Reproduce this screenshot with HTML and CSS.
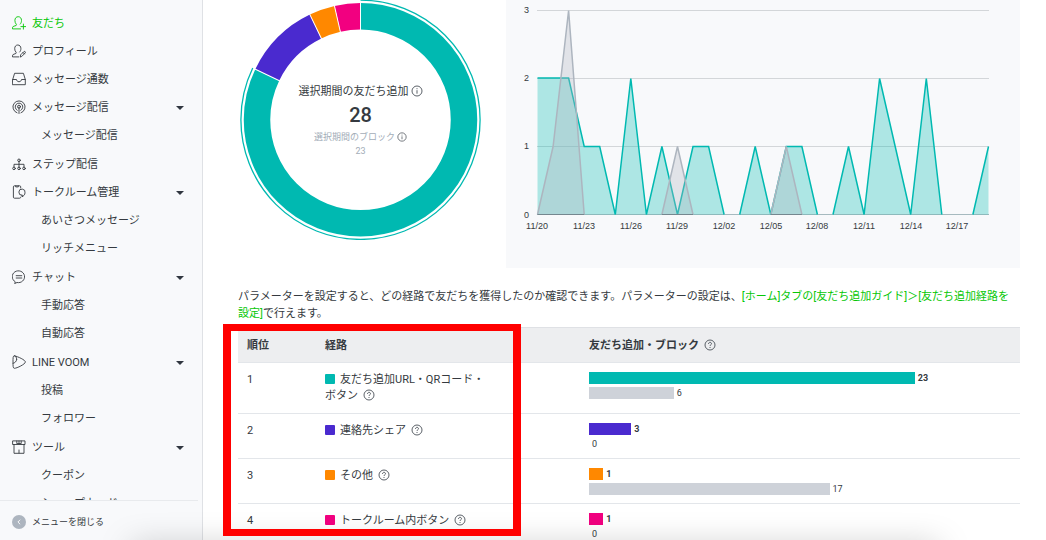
FILE: index.html
```html
<!DOCTYPE html>
<html lang="ja">
<head>
<meta charset="utf-8">
<title>友だち</title>
<link rel="stylesheet" href="styles.css">
</head>
<body>
<div class="app">
  <aside class="sidebar">
    <nav class="nav">
      <div class="nav-group">
        <a class="nav-item active" href="#"><svg class="nav-icon" viewBox="0 0 14 14"><path d="M8.600 12.900H.5v-1.100c0-.9.5-1.300 1.400-1.600l2.200-.7c.5-.2.5-.9.2-1.200C3.500 7.400 2.900 6.200 2.900 4.500 2.900 2.200 4.200.7 6.200.7s3.300 1.500 3.300 3.800c0 1.600-.5 2.700-1.300 3.600M11.400 8.100v5M8.900 10.600h5"/></svg>友だち</a>
        <a class="nav-item" href="#"><svg class="nav-icon" viewBox="0 0 14 14"><path d="M6.800 12.900H.5v-1.100c0-.9.5-1.300 1.400-1.600l2-.7c.5-.2.5-.9.2-1.200-.8-.9-1.400-2-1.400-3.600C2.700 2.300 4 1 5.800 1s3.100 1.300 3.100 3.600c0 1.500-.4 2.500-1.200 3.400M8.400 12.700l.3-1.900 3.200-3.200c.9-.6 2 .4 1.300 1.400L10 12.200zM11 8.500l1.400 1.400"/></svg>プロフィール</a>
        <a class="nav-item" href="#"><svg class="nav-icon" viewBox="0 0 14 14"><path d="M.7 7.500 2.600 1.300h8.800l1.900 6.200v5.200H.7zM.7 7.500h3.800c.2 1.400 1.100 2.200 2.500 2.200s2.300-.8 2.500-2.200h3.800"/></svg>メッセージ通数</a>
        <button class="nav-item" type="button"><svg class="nav-icon" viewBox="0 0 14 14"><path d="M5 12.800a6.100 6.100 0 1 1 4 0M5.200 10.300a3.800 3.800 0 1 1 3.600 0M7 7v6.500"/><circle cx="7" cy="6.700" r="1.500"/></svg>メッセージ配信<span class="caret"></span></button>
        <a class="nav-item sub" href="#">メッセージ配信</a>
      </div>
      <div class="nav-group">
        <a class="nav-item" href="#"><svg class="nav-icon" viewBox="0 0 14 14"><path d="M7 4.500v6M2 10V7.300h10V10"/><circle cx="7" cy="3.300" r="1.300"/><circle cx="2" cy="11.400" r="1.300"/><circle cx="7" cy="11.400" r="1.300"/><circle cx="12" cy="11.400" r="1.300"/></svg>ステップ配信</a>
        <button class="nav-item" type="button"><svg class="nav-icon" viewBox="0 0 14 14"><path d="M8.700 12.200c0 .6-.4 1-1 1H2.400c-.6 0-1-.4-1-1V1.800c0-.6.4-1 1-1h5.300c.6 0 1 .4 1 1V3M3.700.9v1h2.600v-1M10 10.300v1.500c1.500-.7 3-2 3-4a3.100 3.100 0 1 0-3 2.500z"/></svg>トークルーム管理<span class="caret"></span></button>
        <a class="nav-item sub" href="#">あいさつメッセージ</a>
        <a class="nav-item sub" href="#">リッチメニュー</a>
      </div>
      <div class="nav-group">
        <button class="nav-item" type="button"><svg class="nav-icon" viewBox="0 0 14 14"><path d="M3 11.700A6.200 5.900 0 1 1 5 12.500L3 13.400zM4.200 5.700h5.600M4.200 8h5.600"/></svg>チャット<span class="caret"></span></button>
        <a class="nav-item sub" href="#">手動応答</a>
        <a class="nav-item sub" href="#">自動応答</a>
      </div>
      <div class="nav-group">
        <button class="nav-item" type="button"><svg class="nav-icon" viewBox="0 0 14 14"><path d="M4.700 4.500C4.700 2.200 3.500.7 2.200.8 1 .9 1 3 1 7s0 6.200 1.300 6.300C4.800 13.400 13.400 9 13.400 7S6 1.600 2.500.8M1.100 8.300c1.700-.3 3.300-1.600 3.600-3.800"/></svg>LINE VOOM<span class="caret"></span></button>
        <a class="nav-item sub" href="#">投稿</a>
        <a class="nav-item sub" href="#">フォロワー</a>
      </div>
      <div class="nav-group">
        <button class="nav-item" type="button"><svg class="nav-icon" viewBox="0 0 14 14"><path d="M1 .9h12v3.600H1zM2 4.500v8.800h10V4.500M4.800 1v2.600h4.400V1M7 1v2.600M7 13V10"/></svg>ツール<span class="caret"></span></button>
        <a class="nav-item sub" href="#">クーポン</a>
        <a class="nav-item sub" href="#">ショップカード</a>
      </div>
    </nav>
    <button class="collapse" type="button"><svg class="nav-icon" viewBox="0 0 14 14"><circle class="collapse-dot" cx="7" cy="7" r="7"/><path class="collapse-arrow" d="M7.900 5 5.900 7l2 2"/></svg>メニューを閉じる</button>
  </aside>

  <main class="main">
    <section class="summary">
      <div class="donut">
        <svg class="donut-ring" viewBox="0 0 241 240">
          <g fill="none" transform="rotate(-90 120.500 119.800)">
            <g stroke-width="26.500">
              <circle cx="120.500" cy="119.800" r="103.500" pathLength="28" stroke="#00b9b1" stroke-dasharray="23 28"/>
              <circle cx="120.500" cy="119.800" r="103.500" pathLength="28" stroke="#4a2acf" stroke-dasharray="3 28" stroke-dashoffset="-23"/>
              <circle cx="120.500" cy="119.800" r="103.500" pathLength="28" stroke="#ff8800" stroke-dasharray="1 28" stroke-dashoffset="-26"/>
              <circle cx="120.500" cy="119.800" r="103.500" pathLength="28" stroke="#f20080" stroke-dasharray="1 28" stroke-dashoffset="-27"/>
            </g>
            <circle cx="120.500" cy="119.800" r="119.600" pathLength="28" stroke="#00b9b1" stroke-width="1.300" stroke-dasharray="23 28"/>
          </g>
          <g stroke="#fff" stroke-width="1">
            <path d="M120.500 2v29"/>
            <path d="M120.500 2v29" transform="rotate(295.700 120.500 119.800)"/>
            <path d="M120.500 2v29" transform="rotate(334.300 120.500 119.800)"/>
            <path d="M120.500 2v29" transform="rotate(347.100 120.500 119.800)"/>
          </g>
        </svg>
        <div class="donut-text">
          <div class="donut-label">選択期間の友だち追加<svg class="mark mark-info" viewBox="0 0 12 12"><circle cx="6" cy="6" r="5"/><path d="M6 5.200v3.500M6 3.200v1"/></svg></div>
          <div class="donut-value">28</div>
          <div class="donut-minor">選択期間のブロック<svg class="mark mark-small" viewBox="0 0 12 12"><circle cx="6" cy="6" r="5"/><path d="M6 5.200v3.500M6 3.200v1"/></svg></div>
          <div class="donut-minor">23</div>
        </div>
      </div>
      <div class="chart">
        <svg class="chart-plot" viewBox="0 0 514 268">
          <path class="grid" d="M31 10.500h452M31 78.500h452M31 146.500h452"/>
          <path class="grid-base" d="M31 214.500h452"/>
          <g transform="translate(31.500 214.500)">
            <path class="area-add" d="M0 0V-136H31.100L46.700-68H62.200L77.800 0 93.300-136 108.900 0 124.400-68 140 0 155.500-68H171.100L186.600 0H202.200L217.700-68 233.300 0 248.800-68H264.400L279.900 0H295.500L311-68 326.600 0 342.100-136 357.700-68 373.200 0 388.800-136 404.300 0H435.400L451-68V0z"/>
            <path class="line-add" d="M0-136.500H31.100L46.700-68H62.200L77.800 0 93.300-136 108.900 0 124.400-68 140 0 155.500-68H171.100L186.600 0M202.200 0 217.700-68 233.300 0 248.800-68H264.400L279.900 0M295.500 0 311-68 326.600 0 342.100-136 357.700-68 373.200 0 388.800-136 404.300 0M435.400 0 451-68"/>
            <path class="area-block" d="M0 0 15.600-68 31.100-204 46.700 0zM124.400 0 140-68 155.500 0zM233.300 0 248.800-68 264.400 0z"/>
            <path class="line-block" d="M0 0 15.600-68 31.100-204 46.700 0M124.400 0 140-68 155.500 0M233.300 0 248.800-68 264.400 0"/>
            <path class="base-line" d="M0 0H46.700M124.400 0H155.500M233.300 0H264.400"/>
          </g>
          <g class="axis" text-anchor="end"><text x="23" y="13">3</text><text x="23" y="81">2</text><text x="23" y="149">1</text><text x="23" y="218">0</text></g>
          <g class="axis" text-anchor="middle"><text x="31" y="229">11/20</text><text x="78" y="229">11/23</text><text x="125" y="229">11/26</text><text x="171" y="229">11/29</text><text x="218" y="229">12/02</text><text x="265" y="229">12/05</text><text x="311" y="229">12/08</text><text x="358" y="229">12/11</text><text x="405" y="229">12/14</text><text x="451" y="229">12/17</text></g>
        </svg>
      </div>
    </section>

    <p class="note">パラメーターを設定すると、どの経路で友だちを獲得したのか確認できます。パラメーターの設定は、<a href="#">[ホーム]タブの[友だち追加ガイド]＞[友だち追加経路を設定]</a>で行えます。</p>

    <div class="routes">
      <table class="route-table">
        <thead>
          <tr><th class="col-rank" scope="col">順位</th><th class="col-route" scope="col">経路</th><th scope="col">友だち追加・ブロック<svg class="mark mark-help" viewBox="0 0 12 12"><circle cx="6" cy="6" r="5"/><path d="M4.500 4.900c0-2.100 3-2.100 3-.2C7.500 5.800 6 5.800 6 7M6 8v1"/></svg></th></tr>
        </thead>
        <tbody>
          <tr>
            <td>1</td>
            <td><div class="route"><span class="swatch teal"></span>友だち追加URL・QRコード・ボタン<svg class="mark mark-help" viewBox="0 0 12 12"><circle cx="6" cy="6" r="5"/><path d="M4.500 4.900c0-2.100 3-2.100 3-.2C7.500 5.800 6 5.800 6 7M6 8v1"/></svg></div></td>
            <td><div class="bars"><div class="bar-row"><span class="bar teal" style="width:77.200%"></span><b>23</b></div><div class="bar-row"><span class="bar gray" style="width:20.100%"></span>6</div></div></td>
          </tr>
          <tr>
            <td>2</td>
            <td><div class="route"><span class="swatch violet"></span>連絡先シェア<svg class="mark mark-help" viewBox="0 0 12 12"><circle cx="6" cy="6" r="5"/><path d="M4.500 4.900c0-2.100 3-2.100 3-.2C7.500 5.800 6 5.800 6 7M6 8v1"/></svg></div></td>
            <td><div class="bars"><div class="bar-row"><span class="bar violet" style="width:10%"></span><b>3</b></div><div class="bar-row"><span class="bar gray" style="width:0%"></span>0</div></div></td>
          </tr>
          <tr>
            <td>3</td>
            <td><div class="route"><span class="swatch orange"></span>その他<svg class="mark mark-help" viewBox="0 0 12 12"><circle cx="6" cy="6" r="5"/><path d="M4.500 4.900c0-2.100 3-2.100 3-.2C7.500 5.800 6 5.800 6 7M6 8v1"/></svg></div></td>
            <td><div class="bars"><div class="bar-row"><span class="bar orange" style="width:3.400%"></span><b>1</b></div><div class="bar-row"><span class="bar gray" style="width:57%"></span>17</div></div></td>
          </tr>
          <tr>
            <td>4</td>
            <td><div class="route"><span class="swatch pink"></span>トークルーム内ボタン<svg class="mark mark-help" viewBox="0 0 12 12"><circle cx="6" cy="6" r="5"/><path d="M4.500 4.900c0-2.100 3-2.100 3-.2C7.500 5.800 6 5.800 6 7M6 8v1"/></svg></div></td>
            <td><div class="bars"><div class="bar-row"><span class="bar pink" style="width:3.400%"></span><b>1</b></div><div class="bar-row"><span class="bar gray" style="width:0%"></span>0</div></div></td>
          </tr>
        </tbody>
      </table>
      <div class="highlight"></div>
    </div>
  </main>
  <div class="bottom-shade"></div>
</div>
</body>
</html>
```
FILE: styles.css
```css
* { box-sizing: border-box; }

body {
  margin: 0;
  background: #fff;
  color: #353a40;
  font: 11px/16px Roboto, "Noto Sans CJK JP", sans-serif;
}

button {
  border: 0;
  background: none;
  color: inherit;
  font: inherit;
  text-align: left;
}

a { color: inherit; text-decoration: none; }

.app {
  position: relative;
  display: flex;
  height: 100vh;
  overflow: hidden;
}

/* Sidebar */
.sidebar {
  display: flex;
  flex: none;
  flex-direction: column;
  width: 203px;
  border-right: 1px solid #dfe1e5;
  background: #f8f9fb;
}

.nav {
  flex: 1;
  min-height: 0;
  padding-top: 10px;
  overflow: hidden;
}

.nav-group { margin-bottom: 1px; }

.nav-item {
  display: flex;
  align-items: center;
  width: 100%;
  height: 28px;
  padding: 0 18px 0 12px;
  white-space: nowrap;
}

.nav-item.sub { padding-left: 41px; }
.nav-item.active { color: #06c706; }

.nav-icon {
  flex: none;
  width: 14px;
  height: 14px;
  margin-right: 6px;
  fill: none;
  stroke: currentColor;
  stroke-width: 0.9;
  stroke-linecap: round;
  stroke-linejoin: round;
}

.nav .nav-icon { margin-bottom: 2px; }

.caret {
  margin-left: auto;
  border: 4px solid transparent;
  border-top-color: #303740;
  border-bottom: 0;
}

.collapse {
  display: flex;
  flex: none;
  align-items: center;
  height: 40px;
  margin-right: 4px;
  padding: 3px 12px 0;
  border-top: 1px solid #e8eaed;
  font-size: 9px;
}

.collapse-dot { fill: #adb5bf; stroke: none; }
.collapse-arrow { stroke: #fff; }

/* Summary */
.main {
  flex: 1;
  min-width: 0;
  padding: 0 26px 0 35px;
  overflow: hidden;
}

.summary {
  display: grid;
  grid-template-columns: 268px 1fr;
}

.donut {
  display: grid;
  justify-items: center;
  align-items: start;
  width: 245px;
}

.donut-ring,
.donut-text { grid-area: 1 / 1; }

.donut-ring {
  width: 241px;
  height: 240px;
}

.donut-text {
  padding-top: 84px;
  text-align: center;
}

.donut-value {
  font-size: 20px;
  font-weight: 500;
  line-height: 30px;
}

.donut-minor {
  color: #a3adb8;
  font-size: 9px;
  line-height: 14px;
}

.mark {
  width: 12px;
  height: 12px;
  vertical-align: -2px;
  fill: none;
  stroke: #4a5058;
  stroke-width: 0.9;
}

.mark-info { margin-left: 2px; }
.mark-small { width: 10px; height: 10px; margin-left: 2px; }
.mark-help { margin-left: 5px; }

.chart { background: #f8f9fb; }
.chart-plot { display: block; width: 100%; }
.grid { stroke: #d3d6d9; }
.grid-base { stroke: #a6babf; }
.area-add { fill: #00b9b1; fill-opacity: 0.3; }
.line-add { fill: none; stroke: #00b9b1; stroke-width: 1.5; }
.area-block { fill: #b0b5c0; fill-opacity: 0.32; }
.line-block { fill: none; stroke: #adb5bf; stroke-width: 1.5; }
.base-line { stroke: #75878f; }
.axis { fill: #353a40; font: 9px "Liberation Sans", Arial, sans-serif; }

.note {
  margin: 20px 0 5px;
  padding-right: 8px;
  line-height: 17px;
}

.note a { color: #06c706; }

/* Routes */
.routes { position: relative; }

.route-table {
  width: 100%;
  border-spacing: 0;
  table-layout: fixed;
}

.col-rank { width: 78px; }
.col-route { width: 264px; }

th {
  height: 35px;
  padding: 1px 9px 0;
  border-top: 1px solid #dfe1e5;
  background: #edeef0;
  font-weight: 700;
  text-align: left;
}

td {
  padding: 9px 9px 8px;
  border-top: 1px solid #e3e6ea;
  vertical-align: top;
}

.route {
  max-width: 168px;
  padding-bottom: 1px;
}

.swatch {
  display: inline-block;
  width: 10px;
  height: 10px;
  margin-right: 5px;
  border-radius: 1px;
  vertical-align: -1px;
}

.bars {
  display: flex;
  flex-direction: column;
  gap: 3px;
}

.bar-row {
  display: flex;
  align-items: center;
  gap: 3px;
  height: 12px;
  font-size: 9px;
  line-height: 12px;
}

.bar { height: 12px; }

.teal { background: #00b9b1; }
.violet { background: #4a2acf; }
.orange { background: #ff8800; }
.pink { background: #f20080; }
.gray { background: #ced2d9; }

.highlight {
  position: absolute;
  top: -3px;
  left: -15px;
  z-index: 2;
  width: 298px;
  height: 212px;
  border: solid #f00;
  border-width: 7px 8px;
}

.bottom-shade {
  position: absolute;
  right: 106px;
  bottom: -20px;
  left: 130px;
  z-index: 1;
  height: 12px;
  border-radius: 8px;
  box-shadow: 0 0 32px rgba(0, 0, 0, 0.35);
}
```
